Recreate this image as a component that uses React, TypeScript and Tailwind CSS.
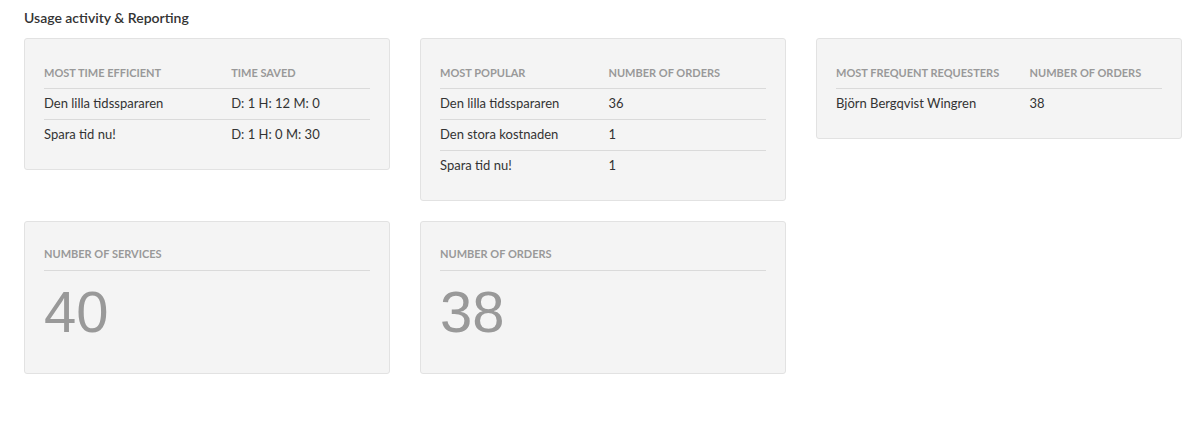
import React from "react";

type Table = { cols: [string, string]; rows: [string, string][] };

const tables: Table[] = [
  {
    cols: ["Most time efficient", "Time saved"],
    rows: [
      ["Den lilla tidsspararen", "D: 1 H: 12 M: 0"],
      ["Spara tid nu!", "D: 1 H: 0 M: 30"],
    ],
  },
  {
    cols: ["Most popular", "Number of orders"],
    rows: [
      ["Den lilla tidsspararen", "36"],
      ["Den stora kostnaden", "1"],
      ["Spara tid nu!", "1"],
    ],
  },
  {
    cols: ["Most frequent requesters", "Number of orders"],
    rows: [["Björn Bergqvist Wingren", "38"]],
  },
];

const counters = [
  { label: "Number of services", value: "40" },
  { label: "Number of orders", value: "38" },
];

function Card({ children }: { children: React.ReactNode }) {
  return (
    <div className="w-[366px] shrink-0 rounded-[3px] border border-[#e2e2e2] bg-[#f4f4f4] px-[19px] pt-[19px] pb-[19px]">
      {children}
    </div>
  );
}

export default function App() {
  return (
    <div className="min-h-[433px] bg-white pl-[24px] pt-[9px] text-[#333]" style={{ fontFamily: "Lato, 'Open Sans', sans-serif" }}>
      <h2 className="text-[14px] font-semibold leading-[18px] text-[#333]">Usage activity &amp; Reporting</h2>
      <div className="mt-[11px] flex flex-col gap-[20px]">
        <div className="flex items-start gap-[30px]">
          {tables.map((t) => (
            <Card key={t.cols[0]}>
              <table className="w-full border-collapse text-left">
                <thead>
                  <tr className="border-b border-[#dadada]">
                    {t.cols.map((c) => (
                      <th key={c} className="h-[30px] pt-[1px] align-middle text-[11px] font-bold uppercase text-[#999]">
                        {c}
                      </th>
                    ))}
                  </tr>
                </thead>
                <tbody>
                  {t.rows.map((r, i) => (
                    <tr key={i} className={i < t.rows.length - 1 ? "border-b border-[#dadada]" : ""}>
                      <td className="h-[31px] align-middle text-[13px]">{r[0]}</td>
                      <td className="h-[31px] align-middle text-[13px]">{r[1]}</td>
                    </tr>
                  ))}
                </tbody>
              </table>
            </Card>
          ))}
        </div>
        <div className="flex items-start gap-[30px]">
          {counters.map((c) => (
            <Card key={c.label}>
              <div className="flex h-[30px] items-center border-b border-[#dadada] pb-[2px] text-[11px] font-bold uppercase text-[#999]">
                {c.label}
              </div>
              <div
                className="h-[83px] pt-[6px] text-[58px] leading-[70px] text-[#999]"
                style={{ fontFamily: "'Liberation Sans', Arial, sans-serif" }}
              >
                {c.value}
              </div>
            </Card>
          ))}
        </div>
      </div>
    </div>
  );
}
